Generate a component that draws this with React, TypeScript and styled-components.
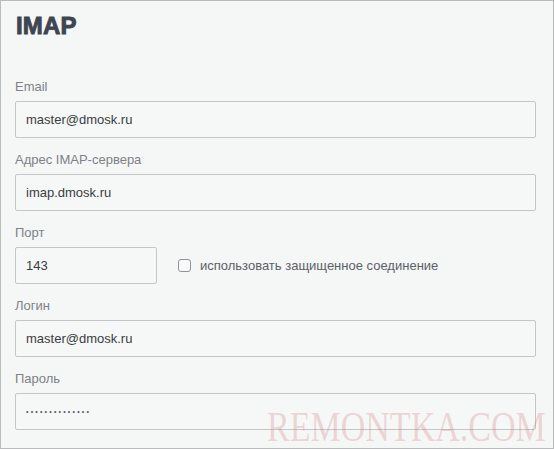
import styled, { createGlobalStyle } from 'styled-components'

const GlobalStyle = createGlobalStyle`
  html, body {
    margin: 0;
    padding: 0;
    background: #f5f6f6;
  }
  * {
    box-sizing: border-box;
  }
`

const App = () => {
  return (
    <>
      <GlobalStyle />
      <Panel>
        <Title>IMAP</Title>
        <Form>
          <Field>
            <Label>Email</Label>
            <Input readOnly value="master@dmosk.ru" />
          </Field>
          <Field>
            <Label>Адрес IMAP-сервера</Label>
            <Input readOnly value="imap.dmosk.ru" />
          </Field>
          <Field>
            <Label>Порт</Label>
            <PortRow>
              <Input readOnly value="143" $width="142px" />
              <CheckLabel>
                <Check />
                использовать защищенное соединение
              </CheckLabel>
            </PortRow>
          </Field>
          <Field>
            <Label>Логин</Label>
            <Input readOnly value="master@dmosk.ru" />
          </Field>
          <Field>
            <Label>Пароль</Label>
            <Input readOnly value="••••••••••••••" $secret />
          </Field>
        </Form>
        <Watermark>REMONTKA.COM</Watermark>
      </Panel>
    </>
  )
}

const Panel = styled.div`
  position: relative;
  width: 554px;
  height: 449px;
  border: 1px solid #b9bbbc;
  background: #f5f6f6;
  padding: 13px 17px 0 14px;
  overflow: hidden;
  font-family: 'Liberation Sans', Arial, sans-serif;
`

const Title = styled.h1`
  margin: 0 0 0 1px;
  font-family: 'Liberation Sans', Arial, sans-serif;
  font-weight: 900;
  font-size: 24px;
  line-height: 24px;
  color: #3e4551;
  letter-spacing: 0.2px;
  -webkit-text-stroke: 0.9px #3e4551;
`

const Form = styled.div`
  display: flex;
  flex-direction: column;
  gap: 14px;
  margin-top: 41px;
`

const Field = styled.div`
  display: flex;
  flex-direction: column;
  gap: 6px;
`

const Label = styled.label`
  font-size: 13px;
  line-height: 16px;
  color: #7d8287;
`

const Input = styled.input<{ $width?: string; $secret?: boolean }>`
  width: ${(p) => p.$width ?? '100%'};
  height: 37px;
  border: 1px solid #c4c6c8;
  border-radius: 2px;
  background: #f6f7f7;
  padding: 0 10px;
  font-family: 'Liberation Sans', Arial, sans-serif;
  font-size: ${(p) => (p.$secret ? '7px' : '13px')};
  letter-spacing: ${(p) => (p.$secret ? '2.2px' : '0')};
  color: ${(p) => (p.$secret ? '#55595d' : '#3a3d40')};
  outline: none;
`

const PortRow = styled.div`
  display: flex;
  align-items: center;
  gap: 21px;
`

const CheckLabel = styled.span`
  display: flex;
  align-items: center;
  gap: 9px;
  font-size: 13px;
  color: #5c6166;
`

const Check = styled.span`
  width: 13px;
  height: 13px;
  border: 1px solid #8e9398;
  border-radius: 3px;
  background: #f8f9f9;
`

const Watermark = styled.div`
  position: absolute;
  left: 266px;
  top: 404px;
  font-family: 'Liberation Serif', 'Times New Roman', serif;
  font-size: 42px;
  line-height: 44px;
  color: rgba(205, 110, 110, 0.26);
  transform: scaleX(0.81);
  transform-origin: left top;
  white-space: nowrap;
  pointer-events: none;
`

export default App
